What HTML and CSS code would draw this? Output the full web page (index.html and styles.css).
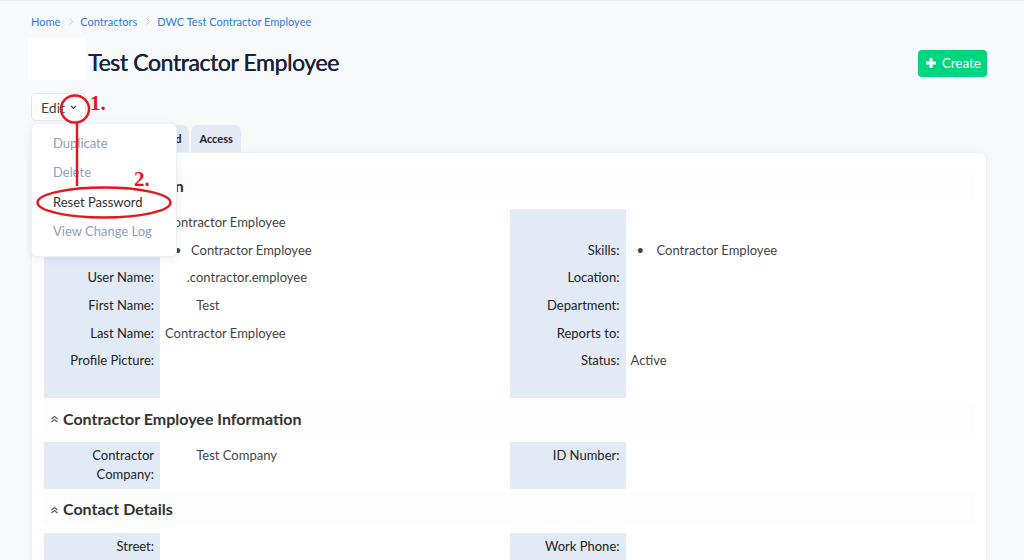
FILE: index.html
```html
<!DOCTYPE html>
<html lang="en">
<head>
    <meta charset="UTF-8">
    <meta name="viewport" content="width=device-width, initial-scale=1.0">
    <title>Test Contractor Employee</title>
    <link rel="stylesheet" href="styles.css">
</head>
<body>
<div id="page">
    <nav class="crumbs">
        <a href="#">Home</a>
        <svg class="sep" width="4" height="7" viewBox="0 0 4 7"><path d="M0.5 0.5L3.5 3.5 0.5 6.5" fill="none" stroke="#c3c9d3" stroke-width="1"/></svg>
        <a href="#">Contractors</a>
        <svg class="sep" width="4" height="7" viewBox="0 0 4 7"><path d="M0.5 0.5L3.5 3.5 0.5 6.5" fill="none" stroke="#c3c9d3" stroke-width="1"/></svg>
        <a href="#">DWC Test Contractor Employee</a>
    </nav>

    <header class="head">
        <div class="logo"></div>
        <h1>Test Contractor Employee</h1>
        <button class="btn-create">
            <svg width="12" height="12" viewBox="0 0 12 12"><path d="M6 1v10M1 6h10" stroke="#fff" stroke-width="3"/></svg>
            Create
        </button>
    </header>

    <div class="actions">
        <button class="btn-edit">Edit
            <svg width="7" height="5" viewBox="0 0 7 5"><path d="M1 1l2.5 2.5L6 1" fill="none" stroke="#444" stroke-width="1.2"/></svg>
        </button>
        <ul class="menu">
            <li class="off">Duplicate</li>
            <li class="off">Delete</li>
            <li>Reset Password</li>
            <li class="off">View Change Log</li>
        </ul>
    </div>

    <div class="tabs">
        <div class="tab active">Details</div>
        <div class="tab">Assigned</div>
        <div class="tab">Access</div>
    </div>

    <section class="card">
        <div class="sec-head">
            <svg class="chev" width="9" height="8" viewBox="0 0 9 8"><path d="M1.5 4L4.5 1.5 7.5 4M1.5 7L4.5 4.5 7.5 7" fill="none" stroke="#666" stroke-width="1.3"/></svg>
            User Information
        </div>
        <div class="grid">
            <div class="fields first">
                <div class="row"><div class="lbl">Name:</div><div class="val">Contractor Employee</div></div>
                <div class="row"><div class="lbl">Roles:</div><div class="val"><span class="dot">&bull;</span>Contractor Employee</div></div>
                <div class="row"><div class="lbl">User Name:</div><div class="val"><span class="hide">test</span>.contractor.employee</div></div>
                <div class="row"><div class="lbl">First Name:</div><div class="val"><span class="hide">xxxxx</span>Test</div></div>
                <div class="row"><div class="lbl">Last Name:</div><div class="val">Contractor Employee</div></div>
                <div class="row"><div class="lbl">Profile Picture:</div><div class="val"></div></div>
            </div>
            <div class="fields first">
                <div class="row"><div class="lbl"></div><div class="val"></div></div>
                <div class="row"><div class="lbl">Skills:</div><div class="val"><span class="dot r">&bull;</span>Contractor Employee</div></div>
                <div class="row"><div class="lbl">Location:</div><div class="val"></div></div>
                <div class="row"><div class="lbl">Department:</div><div class="val"></div></div>
                <div class="row"><div class="lbl">Reports to:</div><div class="val"></div></div>
                <div class="row"><div class="lbl">Status:</div><div class="val">Active</div></div>
            </div>
        </div>

        <div class="sec-head">
            <svg class="chev" width="9" height="8" viewBox="0 0 9 8"><path d="M1.5 4L4.5 1.5 7.5 4M1.5 7L4.5 4.5 7.5 7" fill="none" stroke="#666" stroke-width="1.3"/></svg>
            Contractor Employee Information
        </div>
        <div class="grid">
            <div class="fields">
                <div class="row"><div class="lbl">Contractor Company:</div><div class="val"><span class="hide">xxxxx</span>Test Company</div></div>
            </div>
            <div class="fields">
                <div class="row"><div class="lbl">ID Number:</div><div class="val"></div></div>
            </div>
        </div>

        <div class="sec-head">
            <svg class="chev" width="9" height="8" viewBox="0 0 9 8"><path d="M1.5 4L4.5 1.5 7.5 4M1.5 7L4.5 4.5 7.5 7" fill="none" stroke="#666" stroke-width="1.3"/></svg>
            Contact Details
        </div>
        <div class="grid">
            <div class="fields">
                <div class="row"><div class="lbl">Street:</div><div class="val"></div></div>
                <div class="row"><div class="lbl">City:</div><div class="val"></div></div>
            </div>
            <div class="fields">
                <div class="row"><div class="lbl">Work Phone:</div><div class="val"></div></div>
                <div class="row"><div class="lbl">Mobile:</div><div class="val"></div></div>
            </div>
        </div>
    </section>

    <!-- red hand-drawn markings over the screenshot -->
    <svg class="marks" width="1024" height="560" viewBox="0 0 1024 560">
        <g fill="none" stroke="#e6151f" stroke-width="2.4">
            <ellipse cx="75" cy="109" rx="14" ry="13.5"/>
            <path d="M77 123V186"/>
            <ellipse cx="104" cy="202.5" rx="66.5" ry="15"/>
        </g>
        <g fill="#e6151f" font-family="'Liberation Serif', serif" font-weight="bold" font-size="21">
            <text x="90" y="110">1.</text>
            <text x="134" y="186">2.</text>
        </g>
    </svg>
</div>
</body>
</html>
```

FILE: styles.css
```css
body {
    margin: 0;
    font-family: Lato, "Noto Sans", sans-serif;
    font-size: 13px;
    color: #444;
    background-color: #f8f9fb;
    border-top: 1px solid #eceef2;
}

#page {
    position: relative;
    height: 559px;
    overflow: hidden;
    padding: 0 37px 0 31px;
}

.crumbs {
    display: flex;
    align-items: center;
    height: 18px;
    padding-top: 11px;
    font-size: 11px;
}

.crumbs a {
    color: #2c7be5;
    text-decoration: none;
}

.crumbs .sep {
    margin: 0 7px 0 9px;
}

.head {
    display: flex;
    align-items: center;
    margin-top: 8px;
    height: 42px;
}

.logo {
    width: 58px;
    height: 42px;
    margin-left: -3px;
    background: #fff;
}

.head h1 {
    flex: 1;
    margin: 6px 0 0 2px;
    font-size: 23px;
    font-weight: 400;
    letter-spacing: -0.4px;
    color: #15233d;
    text-shadow: 0.4px 0 0 #15233d;
}

.btn-create {
    display: flex;
    align-items: center;
    gap: 5px;
    height: 27px;
    margin-top: 8px;
    padding: 0 6px 0 7px;
    border: 0;
    border-radius: 4px;
    background: #00d67f;
    color: #fff;
    font-family: inherit;
    font-size: 13.5px;
}

.actions {
    position: relative;
    margin-top: 13px;
    height: 28px;
}

.btn-edit {
    display: flex;
    align-items: center;
    gap: 5px;
    height: 28px;
    width: 55px;
    padding: 0 0 0 9px;
    border: 1px solid #e4e8ee;
    border-radius: 4px;
    background: #fff;
    color: #444;
    font-family: inherit;
    font-size: 14px;
}

.menu {
    position: absolute;
    top: 30px;
    left: 0;
    z-index: 2;
    width: 144px;
    margin: 0;
    padding: 5px 0 9px;
    list-style: none;
    background: #fff;
    border: 1px solid #edf0f4;
    border-radius: 6px;
    box-shadow: 0 2px 8px rgba(30, 40, 70, 0.08);
}

.menu li {
    height: 29.4px;
    line-height: 29.4px;
    padding-left: 21px;
    color: #333;
}

.menu li.off {
    color: #8e9dbd;
}

.tabs {
    display: flex;
    gap: 2px;
    margin-top: 4px;
    height: 27px;
}

.tab {
    padding: 0 8px;
    line-height: 28px;
    font-size: 11px;
    font-weight: 700;
    color: #222;
    background: #e3eaf5;
    border-radius: 7px 7px 0 0;
}

.tab.active {
    padding: 0 31px;
    background: #fff;
}

.card {
    background: #fff;
    border: 1px solid #eef0f4;
    border-radius: 0 8px 8px 8px;
    box-shadow: 0 0 10px rgba(30, 40, 70, 0.04);
    padding: 16px 11px 20px 12px;
}

.sec-head {
    display: flex;
    align-items: center;
    gap: 4px;
    height: 32px;
    margin-top: 4px;
    margin-bottom: 8px;
    padding-left: 6px;
    background: #fdfdfe;
    font-size: 16px;
    font-weight: 700;
    color: #333;
}

.card .sec-head:first-child {
    margin-top: 0;
}

.chev {
    margin-top: 2px;
}

.grid {
    display: grid;
    grid-template-columns: 1fr 1fr;
}

.fields {
    background: linear-gradient(90deg, #e2eaf6 0 116px, transparent 116px);
}

.fields.first {
    padding-bottom: 23.5px;
}

.row {
    display: flex;
    line-height: 19px;
}

.lbl {
    width: 116px;
    min-height: 27.6px;
    flex: none;
    box-sizing: border-box;
    padding: 4.3px 6px 4.3px 0;
    text-align: right;
    color: #222;
}

.val {
    padding: 4.3px 0 4.3px 5px;
}

.dot {
    display: inline-block;
    width: 17px;
    margin-left: 9px;
}

.dot.r {
    width: 20px;
    margin-left: 6px;
}

.hide {
    visibility: hidden;
}

.marks {
    position: absolute;
    top: -1px;
    left: 0;
    z-index: 5;
    pointer-events: none;
}
```
